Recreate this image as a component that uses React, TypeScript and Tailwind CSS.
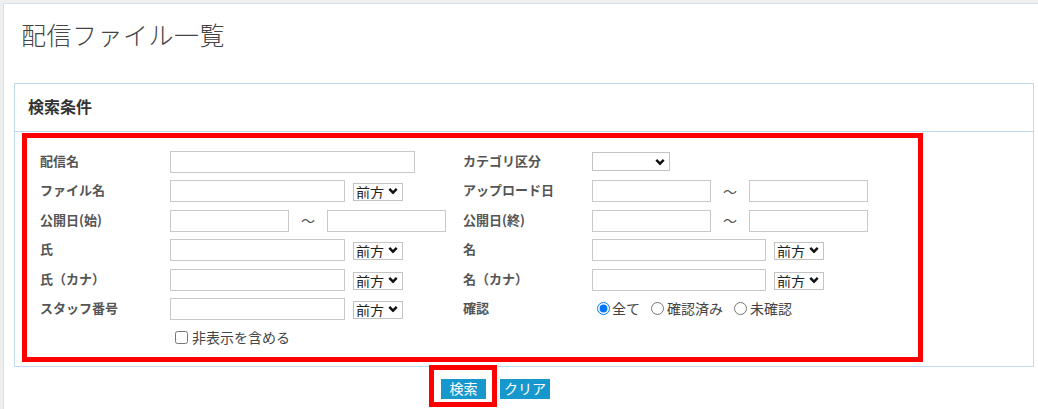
import React from "react";

const Chevron = () => (
  <svg width="10" height="7" viewBox="0 0 10 7" className="pointer-events-none absolute right-[5px] top-1/2 -translate-y-1/2">
    <path d="M1.3 1.3 L5 5.2 L8.7 1.3" stroke="#111" strokeWidth="2.4" fill="none" />
  </svg>
);

const Label = ({ children }: { children: React.ReactNode }) => (
  <span className="block pb-[3px] text-[13px] font-bold text-[#555] leading-none">{children}</span>
);

const Mode = () => (
  <div className="relative ml-[8px]">
    <select className="appearance-none w-[50px] h-[18px] border border-[#c3c3c3] bg-white pl-[2px] text-[14px] leading-none text-[#222]">
      <option>前方</option>
      <option>完全</option>
      <option>部分</option>
    </select>
    <Chevron />
  </div>
);

const Tilde = () => <span className="w-[38px] text-center text-[14px] text-[#555]">～</span>;

const inputCls = "h-[22px] border border-[#c9c9c9] bg-white px-[4px] text-[13px]";

function App() {
  return (
    <div className="h-[409px] w-[1038px] overflow-hidden bg-[#efefef] pl-[3px] pt-[3px] font-['Noto_Sans_CJK_JP','Liberation_Sans',sans-serif]">
      <div className="h-full border-l border-t border-[#d3e2ec] bg-white">
        <h1 className="pl-[17px] pt-[12px] text-[25px] leading-[36px] tracking-[0.5px] font-light text-[#444]">配信ファイル一覧</h1>

        <div className="ml-[10px] mt-[31px] w-[1020px] border border-[#c0dbf0]">
          <div className="flex h-[48px] items-center border-b border-[#c0dbf0] pb-[3px] pl-[13px]">
            <h2 className="text-[16px] font-semibold text-[#333]">検索条件</h2>
          </div>

          <div className="pb-[4px] pl-[7px] pt-[1px]">
            <div className="w-[901px] border-[5px] border-[#fe0000] pb-[9px] pl-[13px] pt-[13px]">
              <div className="flex flex-col gap-y-[7.4px]">
                <div className="flex h-[22px] items-center">
                  <div className="w-[130px]"><Label>配信名</Label></div>
                  <div className="flex w-[293px] items-center"><input className={`${inputCls} w-[245px]`} /></div>
                  <div className="w-[129px]"><Label>カテゴリ区分</Label></div>
                  <div className="relative">
                    <select className="appearance-none w-[78px] h-[19px] border border-[#c3c3c3] bg-white text-[14px]">
                      <option></option>
                    </select>
                    <Chevron />
                  </div>
                </div>

                <div className="flex h-[22px] items-center">
                  <div className="w-[130px]"><Label>ファイル名</Label></div>
                  <div className="flex w-[293px] items-center"><input className={`${inputCls} w-[175px]`} /><Mode /></div>
                  <div className="w-[129px]"><Label>アップロード日</Label></div>
                  <div className="flex items-center"><input className={`${inputCls} w-[119px]`} /><Tilde /><input className={`${inputCls} w-[119px]`} /></div>
                </div>

                <div className="flex h-[22px] items-center">
                  <div className="w-[130px]"><Label>公開日(始)</Label></div>
                  <div className="flex w-[293px] items-center"><input className={`${inputCls} w-[119px]`} /><Tilde /><input className={`${inputCls} w-[119px]`} /></div>
                  <div className="w-[129px]"><Label>公開日(終)</Label></div>
                  <div className="flex items-center"><input className={`${inputCls} w-[119px]`} /><Tilde /><input className={`${inputCls} w-[119px]`} /></div>
                </div>

                <div className="flex h-[22px] items-center">
                  <div className="w-[130px]"><Label>氏</Label></div>
                  <div className="flex w-[293px] items-center"><input className={`${inputCls} w-[175px]`} /><Mode /></div>
                  <div className="w-[129px]"><Label>名</Label></div>
                  <div className="flex items-center"><input className={`${inputCls} w-[174px]`} /><Mode /></div>
                </div>

                <div className="flex h-[22px] items-center">
                  <div className="w-[130px]"><Label>氏（カナ）</Label></div>
                  <div className="flex w-[293px] items-center"><input className={`${inputCls} w-[175px]`} /><Mode /></div>
                  <div className="w-[129px]"><Label>名（カナ）</Label></div>
                  <div className="flex items-center"><input className={`${inputCls} w-[174px]`} /><Mode /></div>
                </div>

                <div className="flex h-[22px] items-center">
                  <div className="w-[130px]"><Label>スタッフ番号</Label></div>
                  <div className="flex w-[293px] items-center"><input className={`${inputCls} w-[175px]`} /><Mode /></div>
                  <div className="w-[129px]"><Label>確認</Label></div>
                  <div className="flex items-center text-[14px] text-[#444]">
                    <label className="flex items-center"><input type="radio" name="kakunin" defaultChecked className="ml-[5px] mr-[2px] h-[13px] w-[13px]" />全て</label>
                    <label className="flex items-center"><input type="radio" name="kakunin" className="ml-[11px] mr-[3px] h-[13px] w-[13px]" />確認済み</label>
                    <label className="flex items-center"><input type="radio" name="kakunin" className="ml-[11px] mr-[3px] h-[13px] w-[13px]" />未確認</label>
                  </div>
                </div>
              </div>

              <div className="mt-[8px] flex h-[20px] items-center pl-[130px]">
                <label className="flex items-center text-[14px] text-[#444]">
                  <input type="checkbox" className="ml-[5px] mr-[4px] h-[13px] w-[13px]" />非表示を含める
                </label>
              </div>
            </div>
          </div>
        </div>

        <div className="-mt-[2px] flex items-start pl-[425px]">
          <div className="h-[42px] w-[68px] border-[5px] border-[#fe0000] pl-[7px] pt-[9px]">
            <button className="flex h-[20px] w-[45px] items-center justify-center bg-[#1798cd] text-[14px] text-white">検索</button>
          </div>
          <button className="ml-[3px] mt-[14px] flex h-[20px] w-[50px] items-center justify-center bg-[#1798cd] text-[14px] text-white">クリア</button>
        </div>
      </div>
    </div>
  );
}

export default App;
